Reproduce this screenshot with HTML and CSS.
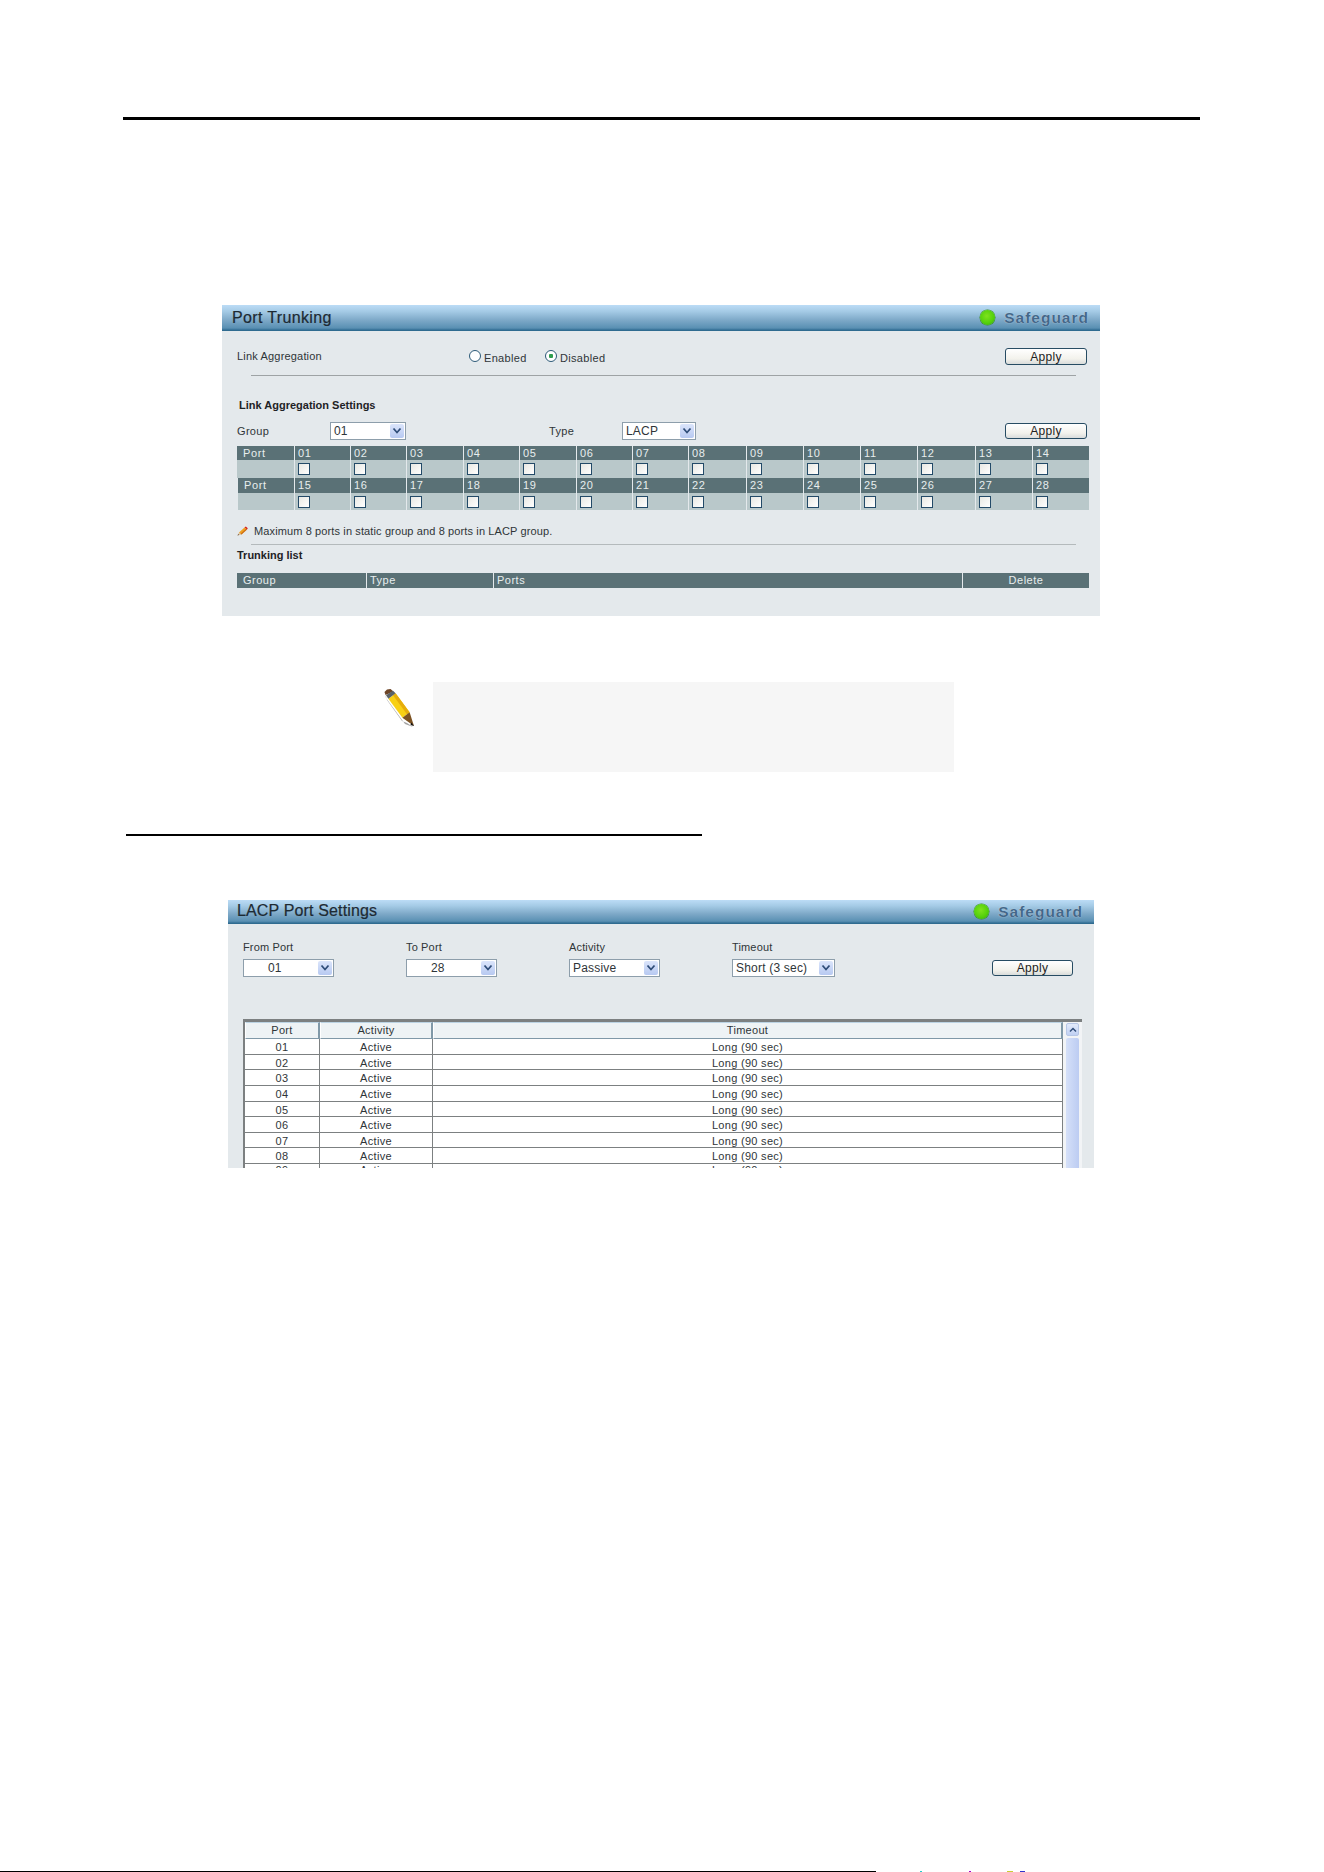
FILE: index.html
```html
<!DOCTYPE html>
<html lang="en">
<head>
<meta charset="utf-8">
<title>Port Trunking and LACP Port Settings</title>
<link rel="stylesheet" href="styles.css">
</head>
<body>
<div class="page">
  <div class="top-rule"></div>

  <section class="panel panel-trunk">
    <header class="panel-head head-trunk">
      <h2 class="panel-title">Port Trunking</h2>
      <div class="safeguard"><span class="led"></span><span class="safe-text">Safeguard</span></div>
    </header>
    <div class="trunk-body">
      <div class="agg-row">
        <span class="agg-label">Link Aggregation</span>
        <label class="radio-label"><input type="radio" name="agg" class="radio">Enabled</label>
        <label class="radio-label"><input type="radio" name="agg" class="radio" checked>Disabled</label>
        <button class="apply apply-trunk">Apply</button>
      </div>
      <div class="divider divider-a"></div>
      <div class="bold-title settings-title">Link Aggregation Settings</div>
      <div class="group-row">
        <span class="group-label">Group</span>
        <div class="sel sel-group"><span class="sel-text">01</span><span class="sel-btn"><svg viewBox="0 0 10 8" class="chev"><path d="M1.5 1.5 5 5.5 8.5 1.5" /></svg></span></div>
        <span class="type-label">Type</span>
        <div class="sel sel-type"><span class="sel-text">LACP</span><span class="sel-btn"><svg viewBox="0 0 10 8" class="chev"><path d="M1.5 1.5 5 5.5 8.5 1.5" /></svg></span></div>
        <button class="apply apply-trunk apply-group">Apply</button>
      </div>

      <div class="ports">
        <div class="ph ph-first">Port</div><div class="ph">01</div><div class="ph">02</div><div class="ph">03</div><div class="ph">04</div><div class="ph">05</div><div class="ph">06</div><div class="ph">07</div><div class="ph">08</div><div class="ph">09</div><div class="ph">10</div><div class="ph">11</div><div class="ph">12</div><div class="ph">13</div><div class="ph">14</div>
        <div class="pc pc-first"></div><div class="pc"><input type="checkbox" class="cb"></div><div class="pc"><input type="checkbox" class="cb"></div><div class="pc"><input type="checkbox" class="cb"></div><div class="pc"><input type="checkbox" class="cb"></div><div class="pc"><input type="checkbox" class="cb"></div><div class="pc"><input type="checkbox" class="cb"></div><div class="pc"><input type="checkbox" class="cb"></div><div class="pc"><input type="checkbox" class="cb"></div><div class="pc"><input type="checkbox" class="cb"></div><div class="pc"><input type="checkbox" class="cb"></div><div class="pc"><input type="checkbox" class="cb"></div><div class="pc"><input type="checkbox" class="cb"></div><div class="pc"><input type="checkbox" class="cb"></div><div class="pc"><input type="checkbox" class="cb"></div>
        <div class="ph ph-first ph-second">Port</div><div class="ph">15</div><div class="ph">16</div><div class="ph">17</div><div class="ph">18</div><div class="ph">19</div><div class="ph">20</div><div class="ph">21</div><div class="ph">22</div><div class="ph">23</div><div class="ph">24</div><div class="ph">25</div><div class="ph">26</div><div class="ph">27</div><div class="ph">28</div>
        <div class="pc pc-first pc-second"></div><div class="pc"><input type="checkbox" class="cb"></div><div class="pc"><input type="checkbox" class="cb"></div><div class="pc"><input type="checkbox" class="cb"></div><div class="pc"><input type="checkbox" class="cb"></div><div class="pc"><input type="checkbox" class="cb"></div><div class="pc"><input type="checkbox" class="cb"></div><div class="pc"><input type="checkbox" class="cb"></div><div class="pc"><input type="checkbox" class="cb"></div><div class="pc"><input type="checkbox" class="cb"></div><div class="pc"><input type="checkbox" class="cb"></div><div class="pc"><input type="checkbox" class="cb"></div><div class="pc"><input type="checkbox" class="cb"></div><div class="pc"><input type="checkbox" class="cb"></div><div class="pc"><input type="checkbox" class="cb"></div>
      </div>

      <div class="hint">
        <svg class="hint-pencil" viewBox="0 0 11 10"><path d="M.5 9.500 2 6.500 4.500 8.500Z" fill="#d9c3a0"/><path d="M.5 9.500 1.200 8 2 9Z" fill="#5a3a20"/><path d="M2 6.500 7.500 1.500 10 3.500 4.500 8.500Z" fill="#f0a020"/><path d="M4.500 8.500 10 3.500 9.200 2.800 3.600 7.800Z" fill="#c86a1a"/><path d="M7.500 1.500 8.800.500 10.800 2.300 10 3.500Z" fill="#d8241c"/></svg>
        <span>Maximum 8 ports in static group and 8 ports in LACP group.</span>
      </div>
      <div class="divider divider-b"></div>
      <div class="bold-title trunk-list-title">Trunking list</div>
      <div class="list-head">
        <div class="lh lh-group">Group</div>
        <div class="lh lh-type">Type</div>
        <div class="lh lh-ports">Ports</div>
        <div class="lh lh-delete">Delete</div>
      </div>
    </div>
  </section>

  <div class="note">
    <svg class="note-pencil" viewBox="0 0 32 40">
      <path d="M2 6 4 12 19 33 24 35 30 39 22 36 3 10Z" fill="#8d8d8d" opacity=".8"/>
      <path d="M5.400 10.700 12.600 5.300 26.600 24.300 19.400 29.700Z" fill="#f8d015"/>
      <path d="M10 7.300 12.600 5.300 26.600 24.300 24 26.200Z" fill="#e6ad0c"/>
      <path d="M19.400 29.700 26.600 24.300 31 38Z" fill="#7c5222"/>
      <path d="M28.300 34.500 31 38 27.500 37 Z" fill="#111"/>
      <path d="M2.500 7 1.500 4 4 1.500 7.500 1 10.500 3.500Z" fill="#6d4526"/>
      <path d="M3 7.300 10 2.800 12.600 5.300 5.400 10.700Z" fill="#5a6268"/>
    </svg>
    <div class="note-box"></div>
  </div>

  <div class="mid-rule"></div>

  <section class="panel panel-lacp">
    <header class="panel-head head-lacp">
      <h2 class="panel-title title-lacp">LACP Port Settings</h2>
      <div class="safeguard"><span class="led"></span><span class="safe-text">Safeguard</span></div>
    </header>
    <div class="lacp-body">
      <div class="lacp-controls">
        <div class="field">
          <span class="field-label">From Port</span>
          <div class="sel sel-wide"><span class="sel-text sel-text-center">01</span><span class="sel-btn"><svg viewBox="0 0 10 8" class="chev"><path d="M1.5 1.5 5 5.5 8.500 1.5" /></svg></span></div>
        </div>
        <div class="field">
          <span class="field-label">To Port</span>
          <div class="sel sel-wide"><span class="sel-text sel-text-center">28</span><span class="sel-btn"><svg viewBox="0 0 10 8" class="chev"><path d="M1.5 1.5 5 5.5 8.500 1.5" /></svg></span></div>
        </div>
        <div class="field">
          <span class="field-label">Activity</span>
          <div class="sel sel-wide"><span class="sel-text">Passive</span><span class="sel-btn"><svg viewBox="0 0 10 8" class="chev"><path d="M1.5 1.5 5 5.5 8.500 1.5" /></svg></span></div>
        </div>
        <div class="field">
          <span class="field-label">Timeout</span>
          <div class="sel sel-timeout"><span class="sel-text">Short (3 sec)</span><span class="sel-btn"><svg viewBox="0 0 10 8" class="chev"><path d="M1.5 1.5 5 5.5 8.500 1.5" /></svg></span></div>
        </div>
        <button class="apply apply-lacp">Apply</button>
      </div>

      <div class="lacp-table">
        <div class="lacp-grid">
          <div class="th">Port</div><div class="th">Activity</div><div class="th">Timeout</div>
          <div class="td">01</div><div class="td">Active</div><div class="td">Long (90 sec)</div>
          <div class="td">02</div><div class="td">Active</div><div class="td">Long (90 sec)</div>
          <div class="td">03</div><div class="td">Active</div><div class="td">Long (90 sec)</div>
          <div class="td">04</div><div class="td">Active</div><div class="td">Long (90 sec)</div>
          <div class="td">05</div><div class="td">Active</div><div class="td">Long (90 sec)</div>
          <div class="td">06</div><div class="td">Active</div><div class="td">Long (90 sec)</div>
          <div class="td">07</div><div class="td">Active</div><div class="td">Long (90 sec)</div>
          <div class="td">08</div><div class="td">Active</div><div class="td">Long (90 sec)</div>
          <div class="td td-clipped">09</div><div class="td td-clipped">Active</div><div class="td td-clipped">Long (90 sec)</div>
        </div>
        <div class="scrollbar">
          <div class="scroll-up"><svg viewBox="0 0 10 8" class="chev-up"><path d="M2 5.500 5 2.500 8 5.500"/></svg></div>
          <div class="scroll-track"></div>
        </div>
      </div>
    </div>
  </section>

  <footer class="foot">
    <div class="foot-rule"></div>
    <span class="dot dot-a"></span><span class="dot dot-b"></span><span class="dot dot-c"></span><span class="dot dot-d"></span>
  </footer>
</div>
</body>
</html>
```

FILE: styles.css
```css
* { box-sizing: border-box; }

html, body {
  margin: 0;
  height: 1872px;
  overflow: hidden;
  background: #fff;
}

body {
  font-family: "Liberation Sans", Arial, sans-serif;
  font-size: 11px;
  color: #2f3538;
}

.page {
  height: 1872px;
  padding-top: 117px;
  display: flex;
  flex-direction: column;
  align-items: flex-start;
}

.top-rule {
  width: 1077px;
  height: 3px;
  margin-left: 123px;
  background: #000;
}

/* Panels */
.panel {
  background: #e4e9ec;
  overflow: hidden;
  flex: none;
}

.panel-trunk {
  width: 878px;
  margin: 185px 0 0 222px;
}

.panel-lacp {
  width: 866px;
  height: 268px;
  margin: 64px 0 0 228px;
}

.panel-head {
  display: flex;
  align-items: center;
  justify-content: space-between;
  background: linear-gradient(#bcdcf6 0%, #a5cbe6 25%, #7ea9c8 60%, #5a90b3 92%, #336f95 100%);
  border-bottom: 1px solid #2f6b90;
}

.head-trunk { height: 26px; padding: 0 11px 0 10px; }
.head-lacp { height: 24px; padding: 0 11px 0 9px; }

.panel-title {
  margin: 0;
  font-size: 16px;
  font-weight: 400;
  letter-spacing: .35px;
  color: #1d2a33;
  -webkit-text-stroke: .2px #1d2a33;
}

.title-lacp { letter-spacing: .15px; margin-top: -1px; }

.safeguard {
  display: flex;
  align-items: center;
  gap: 9px;
}

.led {
  width: 15px;
  height: 15px;
  border-radius: 50%;
  background: radial-gradient(circle at 45% 40%, #7fe21e 0%, #55d10c 55%, #37a80a 100%);
  box-shadow: 0 0 0 .5px #3b8f2a;
}

.safe-text {
  font-size: 15.5px;
  font-weight: 700;
  letter-spacing: 1px;
  color: #44688a;
  text-shadow: 0 0 1px #dce8f0;
}

/* Port Trunking body */
.trunk-body {
  padding: 17px 11px 28px 15px;
  font-size: 11px;
  letter-spacing: .32px;
}

.agg-row {
  display: flex;
  align-items: center;
  height: 17px;
}

.agg-label {
  width: 232px;
  margin-top: -2px;
  letter-spacing: .18px;
}

.radio-label {
  display: flex;
  align-items: center;
  gap: 3px;
  width: 76px;
  padding-top: 2px;
}

.radio {
  appearance: none;
  width: 12px;
  height: 12px;
  margin: -3px 0 0;
  border: 1px solid #2c5a78;
  border-radius: 50%;
  background: #fff;
}

.radio:checked {
  background: radial-gradient(circle, #2e9c4e 0 2px, #fff 2.5px);
}

.apply {
  flex: none;
  height: 17px;
  padding: 0;
  font: 12px "Liberation Sans", Arial, sans-serif;
  letter-spacing: .3px;
  color: #222;
  border: 1px solid #274c63;
  border-radius: 3px;
  background: linear-gradient(#fff, #f3f2ec 65%, #d9dcdb);
}

.apply-trunk {
  width: 82px;
  margin-left: auto;
  margin-right: 2px;
}

.apply-group { height: 16px; }

.divider { height: 1px; background: #9ea3a5; }
.divider-a { width: 825px; margin: 10px 0 0 14px; }
.divider-b { width: 825px; margin: 6px 0 0 14px; background: #b4babc; }

.bold-title {
  font-weight: 700;
  line-height: 14px;
  letter-spacing: 0;
  color: #1e2225;
}

.settings-title { margin: 22px 0 0 2px; }
.trunk-list-title { margin-top: 3px; }

.group-row {
  display: flex;
  align-items: center;
  height: 18px;
  margin-top: 10px;
}

.group-label { width: 93px; }
.type-label { width: 73px; margin-left: 143px; }

/* Selects */
.sel {
  display: flex;
  align-items: center;
  justify-content: space-between;
  height: 18px;
  padding: 1px;
  background: #fff;
  border: 1px solid #8d9eab;
  font-size: 12px;
  letter-spacing: .2px;
}

.sel-group { width: 76px; }
.sel-type { width: 74px; }
.sel-wide { width: 91px; }
.sel-timeout { width: 103px; }

.sel-text { padding-left: 2px; }
.sel-text-center { padding-left: 23px; }

.sel-btn {
  display: flex;
  align-items: center;
  justify-content: center;
  width: 14px;
  height: 14px;
  background: linear-gradient(#dbe5fb, #b7c9f1);
  border-radius: 2px;
}

.chev {
  width: 10px;
  height: 8px;
  fill: none;
  stroke: #2f4d78;
  stroke-width: 1.8;
}

/* Port grid */
.ports {
  display: grid;
  grid-template-columns: 57px 56px 56px 57px 56px 57px 56px 56px 58px 57px 57px 57px 58px 57px 57px;
  grid-template-rows: 14px 18px 15px 17px;
  width: 852px;
  margin-top: 6px;
}

.ph {
  padding-left: 3px;
  line-height: 14px;
  color: #e8eeee;
  background: #5a7176;
  border-left: 1px solid #e4e9ec;
  letter-spacing: .6px;
}

.ph-first {
  padding-left: 6px;
  border-left: 0;
}

.ph-second { margin-left: 1px; padding-left: 6px; }

.pc {
  padding: 3px 0 0 3px;
  background: #b9c8ca;
  border-left: 1px solid #e4e9ec;
}

.pc-first { border-left: 0; }
.pc-second { margin-left: 1px; }

.cb {
  display: block;
  appearance: none;
  width: 12px;
  height: 12px;
  margin: 0;
  border: 1px solid #234a68;
  background: linear-gradient(135deg, #e8e8e3, #fff);
}

.hint {
  display: flex;
  align-items: center;
  gap: 6px;
  height: 14px;
  margin-top: 14px;
  letter-spacing: .12px;
}

.hint-pencil { width: 11px; height: 10px; flex: none; }

.list-head {
  display: grid;
  grid-template-columns: 129px 127px 469px 127px;
  width: 852px;
  height: 15px;
  margin-top: 11px;
  background: #5a7176;
}

.lh {
  line-height: 15px;
  color: #e8eeee;
  letter-spacing: .5px;
  padding-left: 3px;
  border-left: 1px solid #e4e9ec;
}

.lh-group { padding-left: 6px; border-left: 0; }
.lh-delete { padding-left: 0; text-align: center; }

/* Note */
.note {
  display: flex;
  gap: 18px;
  margin: 66px 0 0 383px;
}

.note-pencil {
  width: 32px;
  height: 40px;
  margin-top: 6px;
  flex: none;
}

.note-box {
  width: 521px;
  height: 90px;
  background: #f6f6f6;
}

.mid-rule {
  width: 576px;
  height: 2px;
  margin: 62px 0 0 126px;
  background: #000;
}

/* LACP */
.lacp-body {
  padding: 16px 21px 0 15px;
  font-size: 11px;
  letter-spacing: .3px;
}

.lacp-controls {
  display: flex;
  align-items: flex-end;
}

.field {
  width: 163px;
  display: flex;
  flex-direction: column;
  gap: 5px;
}

.field-label { line-height: 14px; letter-spacing: .15px; }

.field:nth-child(4) { width: 260px; }

.apply-lacp {
  width: 81px;
  height: 16px;
  margin: 0 0 1px auto;
}

.lacp-table {
  display: flex;
  width: 839px;
  height: 200px;
  margin: 42px 0 0;
  border-top: 3px solid #7c8081;
  border-left: 2px solid #7c8081;
  background: #f2f4f6;
}

.lacp-grid {
  display: grid;
  grid-template-columns: 75px 113px 630px;
  grid-auto-rows: 15.65px;
  grid-template-rows: 17px;
  align-content: start;
  width: 818px;
  flex: none;
  background: #fff;
}

.th, .td {
  text-align: center;
  border-right: 1px solid #7c8081;
  border-bottom: 1px solid #7c8081;
}

.th {
  line-height: 15px;
  background: #eef3f5;
  border-left: 1px solid #fff;
  border-top: 1px solid #bcd4e4;
  border-right: 2px solid #8099a8;
  border-bottom: 1px solid #8099a8;
}

.td { line-height: 16px; }
.td-clipped { line-height: 13px; }

.scrollbar {
  display: flex;
  flex-direction: column;
  gap: 2px;
  width: 13px;
  margin: 1px 0 0 3px;
}

.scroll-up {
  display: flex;
  align-items: center;
  justify-content: center;
  height: 13px;
  background: linear-gradient(#e3ebfb, #c0d0f3);
  border: 1px solid #b7c7e6;
  border-radius: 2px;
}

.chev-up {
  width: 10px;
  height: 8px;
  fill: none;
  stroke: #33507c;
  stroke-width: 1.5;
}

.scroll-track {
  flex: 1;
  background: linear-gradient(90deg, #d5e0f8, #bcccf2);
  border-radius: 2px;
}

/* Footer */
.foot {
  width: 100%;
  height: 1px;
  margin-top: 703px;
  display: flex;
}

.foot-rule {
  width: 876px;
  height: 1px;
  background: #000;
}

.dot { width: 2px; height: 1px; }
.dot-a { margin-left: 44px; background: #2cc; }
.dot-b { margin-left: 47px; background: #a0c; }
.dot-c { margin-left: 36px; background: #cc3; width: 6px; }
.dot-d { margin-left: 7px; background: #33c; width: 5px; }
```
